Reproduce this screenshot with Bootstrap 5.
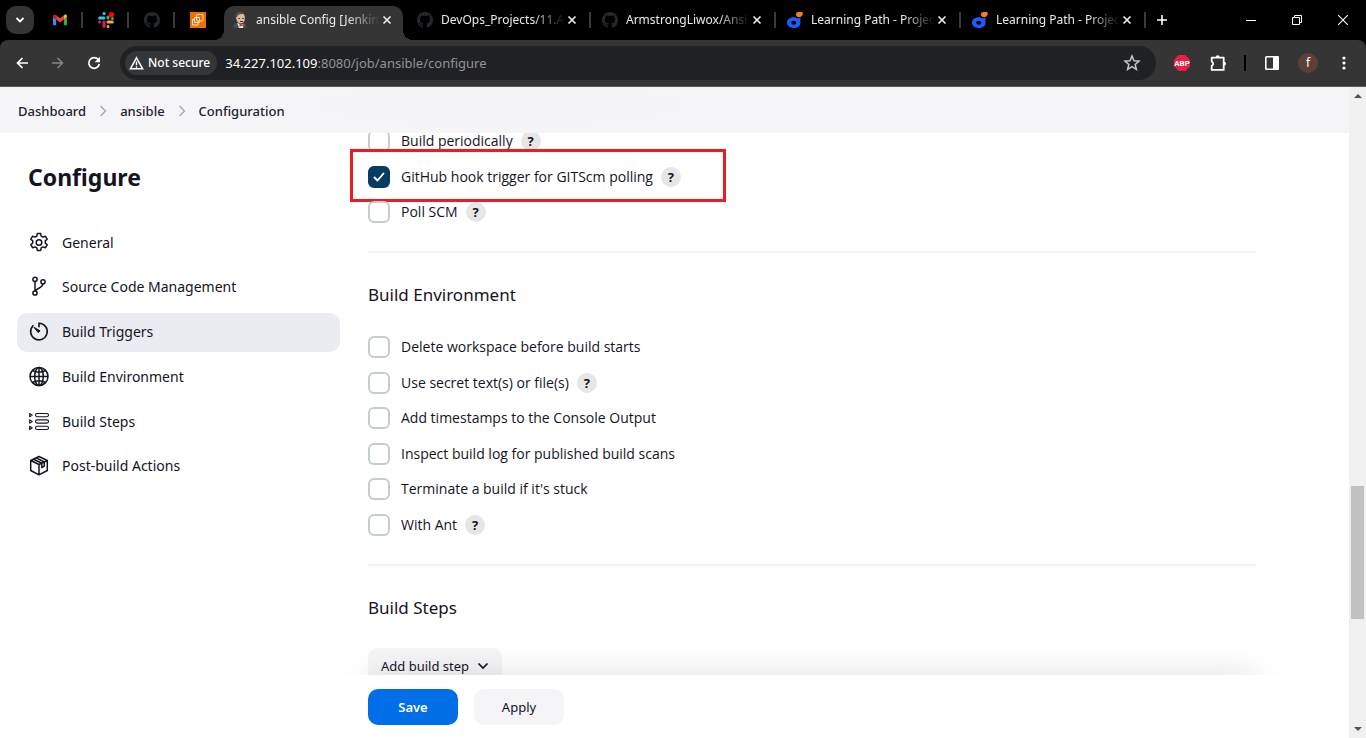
<!DOCTYPE html>
<html lang="en">
<head>
<meta charset="utf-8">
<meta name="viewport" content="width=device-width, initial-scale=1">
<title>ansible Config [Jenkins]</title>
<link href="https://cdn.jsdelivr.net/npm/bootstrap@5.3.0/dist/css/bootstrap.min.css" rel="stylesheet">
<style>
  body { font-family: "Noto Sans", "Open Sans", sans-serif; font-size: 14px; line-height: 20px; font-weight: 400; color: #14141f; background: #fff; }
  button { font: inherit; }
  svg { display: block; flex: none; }
  .bare { border: 0; background: none; padding: 0; display: flex; align-items: center; justify-content: center; color: inherit; flex: none; }

  /* browser window */
  .tabstrip { background: #000; height: 40px; color: #e8eaed; font-size: 12px; }
  .tab-search { width: 28px; height: 28px; border-radius: 10px; background: #353535; margin: 0 3px 0 6px; }
  .pinned { width: 46px; height: 40px; position: relative; }
  .tab { width: 185px; height: 40px; flex: 0 1 auto; min-width: 60px; padding: 0 14px 0 11px; position: relative; }
  .sep::after { content: ""; position: absolute; right: 0; top: 12px; width: 2px; height: 16px; background: #3a3a3a; }
  .tab-title { overflow: hidden; white-space: nowrap; flex: 1 1 0; min-width: 0; margin: 0 2px 0 8px; -webkit-mask-image: linear-gradient(to left, transparent, #000 32px); mask-image: linear-gradient(to left, transparent, #000 32px); }
  .tab a { color: inherit; text-decoration: none; }
  .tab.current::before { content: ""; position: absolute; inset: 6px 3px 0; background: #353535; border-radius: 10px 10px 0 0; }
  .tab.current > * { position: relative; }
  .tab.current .foot { position: absolute; bottom: 0; width: 10px; height: 10px; }
  .foot-l { left: -7px; background: radial-gradient(circle at 0 0, transparent 10px, #353535 10px); }
  .foot-r { right: -7px; background: radial-gradient(circle at 100% 0, transparent 10px, #353535 10px); }
  .win { width: 46px; height: 40px; }
  .toolbar-wrap { background: #000; }
  .toolbar { background: #353535; height: 47px; border-radius: 8px 8px 0 0; border-bottom: 1px solid #5c5c5c; padding: 0 4px; color: #fff; }
  .tool { width: 36px; height: 36px; }
  .new-tab { width: 32px; height: 36px; }
  .omnibox { background: #202124; height: 34px; border-radius: 17px; margin: 0 8px; padding: 0 15px 0 5px; min-width: 0; }
  .chip { background: #353638; border-radius: 12px; height: 24px; padding: 0 7px 0 4px; font-size: 12px; font-weight: 500; color: #fff; gap: 4px; }
  .address { color: #fff; margin-left: 8px; white-space: nowrap; overflow: hidden; font-size: 13px; }
  .address span { color: #929497; }
  .avatar { width: 20px; height: 20px; border-radius: 50%; background: #5d4037; font-size: 12px; line-height: 20px; }
  .tool-sep { width: 18px; }
  .tool-sep::before { content: ""; display: block; width: 2px; height: 16px; margin: auto; background: #000; }

  /* page */
  .trail { background: radial-gradient(ellipse 200px 24px at 500px 18px, #f2f2f5, #f5f5f8); height: 46px; padding: 2px 18px 0; font-size: 13px; font-weight: 500; }
  .trail ol { gap: 13px; }
  .trail a { color: #22222e; text-decoration: none; }
  .side { width: 340px; padding: 24px 0 0 17px; }
  .side h1 { font-size: 23px; line-height: 40px; font-weight: 700; margin: 0 0 26px 11px; }
  .side .nav { min-height: 263px; justify-content: space-between; }
  .side .nav-link { height: 39px; padding: 0 11px; border-radius: 10px; gap: 12px; color: #14141f; }
  .side .nav-link.active { background: #ebecf2; }
  .form-area { padding: 0 93px 0 28px; overflow: hidden; }
  .scrolled { margin-top: -3px; }
  .opts-3 { min-height: 93px; }
  .opts-6 { min-height: 200px; margin-top: 29px; }
  .opt { height: 22px; position: relative; }
  .opt label { font-family: "Open Sans", "Noto Sans", sans-serif; }
  .opt .form-check-input { width: 22px; height: 22px; margin: 0 11px 0 0; border: 2px solid #c3ccd1; border-radius: 6px; flex: none; }
  .opt .form-check-input:checked { background-color: #063d62; border-color: #063d62; background-image: url("data:image/svg+xml,%3csvg xmlns='http://www.w3.org/2000/svg' viewBox='0 0 18 18'%3e%3cpath fill='none' stroke='%23fff' stroke-width='1.900' stroke-linecap='round' stroke-linejoin='round' d='M4.500 9.500l3 3 6-7'/%3e%3c/svg%3e"); }
  .help { width: 20px; height: 20px; border-radius: 50%; background: #e6e6e6; font-size: 13px; font-weight: 700; margin-left: 8px; }
  .callout { position: absolute; left: -18px; top: -17px; width: 376px; height: 53px; border: 3px solid #ed1c24; pointer-events: none; }
  .rule { border: 0; height: 2px; background: #f2f2f7; opacity: 1; margin: 28px 0 30px; }
  .form-area h2 { font-size: 17px; line-height: 24px; font-weight: 400; margin: 0; }
  .btn-soft, .btn-main { border: 0; border-radius: 10px; height: 36px; font-size: 13px; font-weight: 400; line-height: 20px; padding: 0 13px; }
  .btn-soft { background: #f5f5f8; color: #14141f; }
  .btn-main { background: #006ee6; color: #fff; font-weight: 600; }
  .wide { width: 90px; }
  .add-step { margin-top: 28px; gap: 8px; }
  .actions { height: 63px; padding: 0 93px 0 28px; position: relative; gap: 16px; }
  .actions::before { content: ""; position: absolute; inset: 0 93px 0 28px; box-shadow: 0 0 36px rgba(0, 0, 0, .12); }
  .actions::after { content: ""; position: absolute; inset: 0 0 0 -20px; background: #fff; }
  .actions > * { position: relative; z-index: 1; }
  .scroller { width: 17px; background: #f0f0f0; padding: 6px 2px; flex: none; }
  .thumb { background: #c1c1c1; flex: 133 0 0; }
  .before-thumb { flex: 388 0 0; }
  .after-thumb { flex: 108 0 0; }
</style>
</head>
<body class="vh-100 d-flex flex-column overflow-hidden">

<svg class="d-none" aria-hidden="true">
  <symbol id="octo" viewBox="0 0 16 16"><path fill="#24292f" d="M8 0C3.58 0 0 3.58 0 8c0 3.54 2.29 6.53 5.47 7.59.4.07.55-.17.55-.38 0-.19-.01-.82-.01-1.49-2.01.37-2.53-.49-2.69-.94-.09-.23-.48-.94-.82-1.13-.28-.15-.68-.52-.01-.53.63-.01 1.08.58 1.23.82.72 1.21 1.87.87 2.33.66.07-.52.28-.87.51-1.07-1.78-.2-3.64-.89-3.64-3.95 0-.87.31-1.59.82-2.15-.08-.2-.36-1.02.08-2.12 0 0 .67-.21 2.2.82.64-.18 1.32-.27 2-.27s1.36.09 2 .27c1.53-1.04 2.2-.82 2.2-.82.44 1.1.16 1.92.08 2.12.51.56.82 1.27.82 2.15 0 3.07-1.87 3.75-3.65 3.95.29.25.54.73.54 1.48 0 1.07-.01 1.93-.01 2.2 0 .21.15.46.55.38A8.01 8.01 0 0 0 16 8c0-4.42-3.58-8-8-8z"/></symbol>
  <symbol id="dare" viewBox="0 0 16 16"><path fill="#ff7a1a" d="M9 2.2C9 .8 10 0 11.300 0h3.200C15.500 0 16 .8 15.800 1.800 15.500 4 13.800 5.300 12 5.300S9 4 9 2.200z"/><path fill="#1a5cff" fill-rule="evenodd" d="M6.500 5.200c1.800 0 3 .5 3.700 1 .8.300 2.300-.2 3.200-1v6c0 3-3 4.800-6.700 4.800S0 14 0 10.800s2.800-5.600 6.500-5.600zM6.700 8.800c-1.400 0-2.500.8-2.500 2s1.100 2 2.500 2 2.500-.8 2.500-2-1.100-2-2.500-2z"/></symbol>
  <symbol id="cross" viewBox="0 0 10 10"><path d="M1.500 1.500l7 7M8.500 1.500l-7 7" stroke="currentColor" stroke-width="1.700"/></symbol>
  <symbol id="sepchev" viewBox="0 0 8 12"><path d="M1.500 1l5 5-5 5" fill="none" stroke="#a3a3b8" stroke-width="1.300"/></symbol>
</svg>

<header>
  <div class="tabstrip d-flex align-items-center">
    <button class="bare tab-search" aria-label="Search tabs"><svg width="10" height="8" viewBox="0 0 10 8"><path d="M1.500 2L5 5.500 8.500 2" fill="none" stroke="#fff" stroke-width="1.800"/></svg></button>
    <button class="bare pinned sep" aria-label="Gmail"><svg width="14" height="12" viewBox="0 0 16 12"><path fill="#4285f4" d="M1 12h2.600V5.500L0 2.700V11a1 1 0 0 0 1 1z"/><path fill="#34a853" d="M12.400 12H15a1 1 0 0 0 1-1V2.700l-3.600 2.800z"/><path fill="#ea4335" d="M3.600 5.500V.7L8 4l4.400-3.300v4.800L8 8.800z"/><path fill="#c5221f" d="M0 2.700l3.600 2.800V.7L2.700 0C1.500-.6 0 .2 0 1.600z"/><path fill="#fbbc04" d="M12.400.7v4.800L16 2.700V1.600C16 .2 14.500-.6 13.300 0z"/></svg></button>
    <button class="bare pinned sep" aria-label="Slack"><svg width="16" height="16" viewBox="0 0 16 16"><g stroke-width="3" stroke-linecap="round"><path d="M1.600 6h4.200" stroke="#36c5f0"/><path d="M6 1.600h.1" stroke="#36c5f0"/><path d="M10 6V5" stroke="#2eb67d"/><path d="M14.400 6.500h0" stroke="#2eb67d"/><path d="M10 10h4.300M10 14.400h0" stroke="#ecb22e"/><path d="M6 10v4.300M1.600 10h0" stroke="#e01e5a"/></g><circle cx="13.500" cy="2.700" r="2.700" fill="#f00"/></svg></button>
    <button class="bare pinned sep" aria-label="GitHub"><svg width="16" height="16"><use href="#octo"/></svg></button>
    <button class="bare pinned" aria-label="EC2"><svg width="16" height="16" viewBox="0 0 16 16"><path fill="#ed7100" d="M0 0h16v16H0z"/><g fill="none" stroke="#fde3c8"><rect x="6.500" y="2.500" width="6.500" height="6.500" rx="1"/><path d="M4.500 5.500h5v5h-5zM4.500 7.500h-2v5.500h5.500v-2.500"/></g></svg></button>
    <div class="tab current d-flex align-items-center">
      <span class="foot foot-l"></span><span class="foot foot-r"></span>
      <svg width="16" height="16" viewBox="0 0 16 16"><path fill="#d8b9a0" d="M4 5c0-3 2-4.500 4.500-4.500S13 2.500 12.800 6.500 11 11 9 11.500 4 9 4 5z"/><path fill="#5b5048" d="M3.500 6C2.500 2 5 0 8.500 0c2 0 3.500 1 4 2.500C9 1.500 6 2 5 5z"/><path d="M6.500 6.500h1.500M10.300 6.500h1.500M8 9.500h3" stroke="#4a332a"/><path fill="#335061" d="M2 16c-1.500-2-.8-4 2-5l5 2 3-1.500c2 .5 2.500 2.500 2 4.500z"/><path fill="#f0efe8" d="M5 10.500L9 13l2.500-1.500L11 16H7z"/><path fill="#d33833" d="M7.500 12l2 1 3-1.300v3l-3-1-2 1.300z"/></svg>
      <a class="tab-title" href="#">ansible Config [Jenkin</a>
      <button class="bare" aria-label="Close tab"><svg width="10" height="10"><use href="#cross"/></svg></button>
    </div>
    <div class="tab sep d-flex align-items-center"><svg width="16" height="16"><use href="#octo"/></svg><a class="tab-title" href="#">DevOps_Projects/11.A</a><button class="bare" aria-label="Close tab"><svg width="10" height="10"><use href="#cross"/></svg></button></div>
    <div class="tab sep d-flex align-items-center"><svg width="16" height="16"><use href="#octo"/></svg><a class="tab-title" href="#">ArmstrongLiwox/Ansi</a><button class="bare" aria-label="Close tab"><svg width="10" height="10"><use href="#cross"/></svg></button></div>
    <div class="tab sep d-flex align-items-center"><svg width="16" height="16"><use href="#dare"/></svg><a class="tab-title" href="#">Learning Path - Projec</a><button class="bare" aria-label="Close tab"><svg width="10" height="10"><use href="#cross"/></svg></button></div>
    <div class="tab sep d-flex align-items-center"><svg width="16" height="16"><use href="#dare"/></svg><a class="tab-title" href="#">Learning Path - Projec</a><button class="bare" aria-label="Close tab"><svg width="10" height="10"><use href="#cross"/></svg></button></div>
    <button class="bare new-tab" aria-label="New tab"><svg width="10" height="10" viewBox="0 0 10 10"><path d="M5 0v10M0 5h10" stroke="#fff" stroke-width="1.600"/></svg></button>
    <div class="d-flex ms-auto">
      <button class="bare win" aria-label="Minimize"><svg width="10" height="10"><path d="M0 5.500h10" stroke="#fff"/></svg></button>
      <button class="bare win" aria-label="Restore"><svg width="10" height="10"><path d="M.5 2.500h7v7h-7zM2.500 2V.5h7v7H8" fill="none" stroke="#fff"/></svg></button>
      <button class="bare win" aria-label="Close"><svg width="10" height="10"><path d="M0 0l10 10M10 0L0 10" stroke="#fff" stroke-width="1.100"/></svg></button>
    </div>
  </div>
  <div class="toolbar-wrap"><div class="toolbar d-flex align-items-center">
    <button class="bare tool" aria-label="Back"><svg width="12" height="12" viewBox="0 0 12 12"><path d="M12 6H1.500M6.500 1l-5 5 5 5" fill="none" stroke="#fff" stroke-width="1.700"/></svg></button>
    <button class="bare tool" aria-label="Forward"><svg width="12" height="12" viewBox="0 0 12 12"><path d="M0 6h10.500M5.500 1l5 5-5 5" fill="none" stroke="#858585" stroke-width="1.500"/></svg></button>
    <button class="bare tool" aria-label="Reload"><svg width="14" height="14" viewBox="0 0 14 14"><path d="M11.500 4A5.300 5.300 0 1 0 12.300 8" fill="none" stroke="#fff" stroke-width="1.700"/><path d="M13 .8v5.400H7.600z" fill="#fff"/></svg></button>
    <div class="omnibox d-flex align-items-center flex-grow-1">
      <button class="bare chip"><svg width="15" height="14" viewBox="0 0 15 14"><path d="M7.500 1.800L13.600 12.800H1.400z" fill="none" stroke="#fff" stroke-width="1.500"/><path d="M7.500 5.500v3.800M7.500 10.200v1.500" stroke="#fff" stroke-width="1.400"/></svg>Not secure</button>
      <div class="address flex-grow-1" role="textbox" tabindex="0" aria-label="Address">34.227.102.109<span>:8080/job/ansible/configure</span></div>
      <button class="bare" aria-label="Bookmark"><svg width="18" height="18" viewBox="0 0 18 18"><path d="M9 2l2 4.700 5 .4-3.800 3.300 1.200 5L9 12.700l-4.400 2.700 1.200-5L2 7.100l5-.4z" fill="none" stroke="#c7c8ca" stroke-width="1.500"/></svg></button>
    </div>
    <button class="bare tool" aria-label="Adblock Plus"><svg width="16" height="16" viewBox="0 0 16 16"><path fill="#ed1e45" d="M4.700 0h6.600L16 4.700v6.600L11.300 16H4.700L0 11.300V4.700z"/><text x="8" y="11" text-anchor="middle" font-family="Roboto, sans-serif" font-size="8" font-weight="700" fill="#fff">ABP</text></svg></button>
    <button class="bare tool" aria-label="Extensions"><svg width="18" height="18" viewBox="0 0 18 18"><path d="M2.700 3.700h12v12.200h-12v-4A2.300 2.300 0 0 0 2.700 7.600z" fill="none" stroke="#fff" stroke-width="1.800" stroke-linejoin="round"/><path d="M6.700 3.200a2 2 0 0 1 4 0zM15 7.800a2 2 0 0 1 0 4z" fill="#fff"/></svg></button>
    <span class="tool-sep"></span>
    <button class="bare tool" aria-label="Side panel"><svg width="14" height="14" viewBox="0 0 14 14"><rect x=".8" y=".8" width="12.400" height="12.400" rx=".8" fill="none" stroke="#fff" stroke-width="1.600"/><path d="M8 0h5.500v14H8z" fill="#fff"/></svg></button>
    <button class="bare tool" aria-label="Profile"><span class="avatar">f</span></button>
    <button class="bare tool" aria-label="Menu"><svg width="4" height="14" viewBox="0 0 4 14" fill="#fff"><circle cx="2" cy="2" r="1.600"/><circle cx="2" cy="7" r="1.600"/><circle cx="2" cy="12" r="1.600"/></svg></button>
  </div></div>
</header>

<div class="d-flex flex-grow-1 overflow-hidden">
  <div class="d-flex flex-column flex-grow-1 overflow-hidden">
    <nav class="trail d-flex align-items-center flex-shrink-0" aria-label="Breadcrumb">
      <ol class="d-flex align-items-center list-unstyled m-0">
        <li><a href="#">Dashboard</a></li>
        <li aria-hidden="true"><svg width="8" height="12"><use href="#sepchev"/></svg></li>
        <li><a href="#">ansible</a></li>
        <li aria-hidden="true"><svg width="8" height="12"><use href="#sepchev"/></svg></li>
        <li><a href="#">Configuration</a></li>
      </ol>
    </nav>
    <div class="d-flex flex-grow-1 overflow-hidden">
      <aside class="side flex-shrink-0">
        <h1>Configure</h1>
        <nav class="nav flex-column" aria-label="Sections">
          <a class="nav-link d-flex align-items-center" href="#"><svg width="22" height="22" viewBox="0 0 22 22" fill="none" stroke="currentColor" stroke-width="1.500" stroke-linejoin="round"><path d="M9.300 1.600h3.400l.5 2.500 1.700 1 2.400-.9 1.900 3-1.900 1.700v2.200l1.900 1.700-1.900 3-2.400-.9-1.700 1-.5 2.500H9.300l-.5-2.500-1.700-1-2.400.9-1.900-3 1.900-1.700V8.900L2.800 7.200l1.900-3 2.400.9 1.700-1z"/><circle cx="11" cy="10.500" r="2.800"/></svg>General</a>
          <a class="nav-link d-flex align-items-center" href="#"><svg width="22" height="22" viewBox="0 0 22 22" fill="none" stroke="currentColor" stroke-width="1.500"><circle cx="7" cy="3.300" r="2.100"/><circle cx="7" cy="17" r="2.100"/><circle cx="15" cy="5.800" r="2.100"/><path d="M7 5.400v9.500M14.900 8c-.3 4-5.200 3.500-7.400 6.900"/></svg>Source Code Management</a>
          <a class="nav-link active d-flex align-items-center" href="#" aria-current="true"><svg width="22" height="22" viewBox="0 0 22 22" fill="none" stroke="currentColor" stroke-width="1.600" stroke-linecap="round"><path d="M11 5.800V2.200A8.300 8.300 0 1 1 5 4.700"/><path fill="currentColor" stroke-width="1" stroke-linejoin="round" d="M6.300 6.500l5.700 3.300-1.500 1.600z"/></svg>Build Triggers</a>
          <a class="nav-link d-flex align-items-center" href="#"><svg width="22" height="22" viewBox="0 0 22 22" fill="none" stroke="currentColor" stroke-width="1.500"><circle cx="11" cy="10.500" r="9"/><ellipse cx="11" cy="10.500" rx="4.300" ry="9"/><path d="M11 1.500v18M2 10.500h18M4.500 4.500c3.500 2.200 9.500 2.200 13 0M4.500 16.500c3.500-2.200 9.500-2.200 13 0"/></svg>Build Environment</a>
          <a class="nav-link d-flex align-items-center" href="#"><svg width="22" height="22" viewBox="0 0 22 22" fill="none" stroke="currentColor" stroke-width="1.100"><rect x="7.500" y="2.500" width="13" height="3.200" rx="1.600"/><rect x="7.500" y="8.900" width="13" height="3.200" rx="1.600"/><rect x="7.500" y="15.300" width="13" height="3.200" rx="1.600"/><path stroke-linejoin="round" d="M1.700 2.500l2.600 1.600-2.600 1.600zM1.700 8.900l2.600 1.600-2.600 1.600zM1.700 15.300l2.600 1.600-2.600 1.600z"/></svg>Build Steps</a>
          <a class="nav-link d-flex align-items-center" href="#"><svg width="22" height="22" viewBox="0 0 22 22" fill="none" stroke="currentColor" stroke-width="1.500" stroke-linejoin="round"><path d="M11 1.500l8.300 4v10L11 19.800l-8.300-4.300v-10zM2.700 5.500L11 9.500l8.300-4M11 9.500v10.300M5.500 4.200l8.300 4v4.300l2.500-1.300V7L8.200 2.900"/></svg>Post-build Actions</a>
        </nav>
      </aside>
      <main class="d-flex flex-column flex-grow-1">
        <form class="form-area flex-grow-1" id="config">
          <div class="scrolled opts-3 d-flex flex-column justify-content-between">
            <div class="opt d-flex align-items-center"><input class="form-check-input" type="checkbox" id="c1"><label for="c1">Build periodically</label><button type="button" class="bare help" aria-label="Help">?</button></div>
            <div class="opt d-flex align-items-center"><input class="form-check-input" type="checkbox" id="c2" checked><label for="c2">GitHub hook trigger for GITScm polling</label><button type="button" class="bare help" aria-label="Help">?</button><span class="callout"></span></div>
            <div class="opt d-flex align-items-center"><input class="form-check-input" type="checkbox" id="c3"><label for="c3">Poll SCM</label><button type="button" class="bare help" aria-label="Help">?</button></div>
          </div>
          <hr class="rule">
          <h2>Build Environment</h2>
          <div class="opts-6 d-flex flex-column justify-content-between">
            <div class="opt d-flex align-items-center"><input class="form-check-input" type="checkbox" id="e1"><label for="e1">Delete workspace before build starts</label></div>
            <div class="opt d-flex align-items-center"><input class="form-check-input" type="checkbox" id="e2"><label for="e2">Use secret text(s) or file(s)</label><button type="button" class="bare help" aria-label="Help">?</button></div>
            <div class="opt d-flex align-items-center"><input class="form-check-input" type="checkbox" id="e3"><label for="e3">Add timestamps to the Console Output</label></div>
            <div class="opt d-flex align-items-center"><input class="form-check-input" type="checkbox" id="e4"><label for="e4">Inspect build log for published build scans</label></div>
            <div class="opt d-flex align-items-center"><input class="form-check-input" type="checkbox" id="e5"><label for="e5">Terminate a build if it's stuck</label></div>
            <div class="opt d-flex align-items-center"><input class="form-check-input" type="checkbox" id="e6"><label for="e6">With Ant</label><button type="button" class="bare help" aria-label="Help">?</button></div>
          </div>
          <hr class="rule">
          <h2>Build Steps</h2>
          <button type="button" class="btn btn-soft add-step d-flex align-items-center">Add build step<svg width="12" height="8" viewBox="0 0 12 8"><path d="M1.500 1.500L6 6l4.500-4.500" fill="none" stroke="currentColor" stroke-width="1.700"/></svg></button>
        </form>
        <div class="actions d-flex align-items-center flex-shrink-0">
          <button class="btn btn-main wide" type="submit" form="config">Save</button>
          <button class="btn btn-soft wide" type="button">Apply</button>
        </div>
      </main>
    </div>
  </div>
  <div class="scroller d-flex flex-column align-items-center" aria-hidden="true">
    <svg width="8" height="5"><path d="M0 5l4-4 4 4z" fill="#505050"/></svg>
    <span class="before-thumb"></span>
    <span class="thumb align-self-stretch"></span>
    <span class="after-thumb"></span>
    <svg width="8" height="5"><path d="M0 0l4 4 4-4z" fill="#505050"/></svg>
  </div>
</div>
<script src="https://cdn.jsdelivr.net/npm/bootstrap@5.3.0/dist/js/bootstrap.bundle.min.js"></script>
</body>
</html>
